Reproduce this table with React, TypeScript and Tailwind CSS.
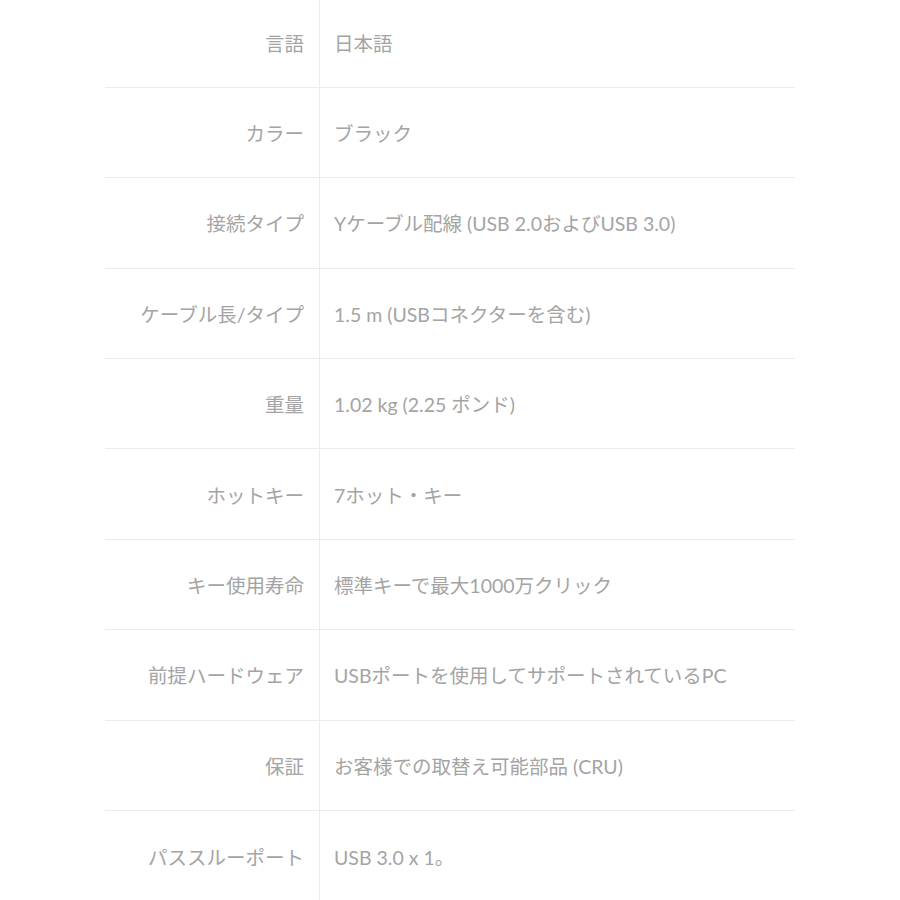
const specs: [string, string][] = [
  ["言語", "日本語"],
  ["カラー", "ブラック"],
  ["接続タイプ", "Yケーブル配線 (USB 2.0およびUSB 3.0)"],
  ["ケーブル長/タイプ", "1.5 m (USBコネクターを含む)"],
  ["重量", "1.02 kg (2.25 ポンド)"],
  ["ホットキー", "7ホット・キー"],
  ["キー使用寿命", "標準キーで最大1000万クリック"],
  ["前提ハードウェア", "USBポートを使用してサポートされているPC"],
  ["保証", "お客様での取替え可能部品 (CRU)"],
  ["パススルーポート", "USB 3.0 x 1。"],
];

export default function App() {
  return (
    <div className="w-[900px] h-[900px] overflow-hidden bg-white font-['Lato','Noto_Sans_CJK_JP',sans-serif] text-[19.5px] text-[#a4a4a4]">
      <div className="ml-[105px] w-[690px] -mt-[2.4px]">
        {specs.map(([label, value], i) => (
          <div
            key={label}
            className={
              "flex h-[90.375px] " +
              (i < specs.length - 1 ? "border-b border-[#ececec]" : "")
            }
          >
            <div className="w-[215px] shrink-0 flex items-center justify-end pr-[15px] pt-[2px] border-r border-[#ececec]">
              {label}
            </div>
            <div className="flex items-center pl-[14px] pt-[2px]">{value}</div>
          </div>
        ))}
      </div>
    </div>
  );
}
